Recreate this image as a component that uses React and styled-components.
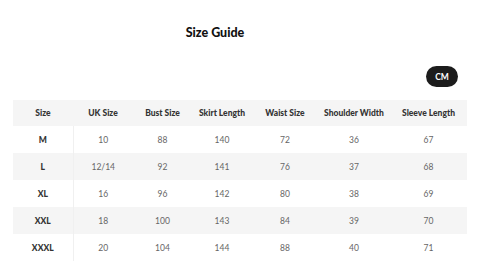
import React from 'react'
import styled, { createGlobalStyle } from 'styled-components'

const GlobalStyle = createGlobalStyle`
    html, body {
        margin: 0;
        padding: 0;
        background: #fff;
    }
`

const columns = [
    { label: 'Size', width: 60 },
    { label: 'UK Size', width: 60 },
    { label: 'Bust Size', width: 59 },
    { label: 'Skirt Length', width: 60 },
    { label: 'Waist Size', width: 66 },
    { label: 'Shoulder Width', width: 72 },
    { label: 'Sleeve Length', width: 77 },
]

const rows = [
    ['M', '10', '88', '140', '72', '36', '67'],
    ['L', '12/14', '92', '141', '76', '37', '68'],
    ['XL', '16', '96', '142', '80', '38', '69'],
    ['XXL', '18', '100', '143', '84', '39', '70'],
    ['XXXL', '20', '104', '144', '88', '40', '71'],
]

const App = () => {
    return (
        <StyledPage>
            <GlobalStyle />
            <StyledTitle>Size Guide</StyledTitle>
            <StyledToolbar>
                <StyledUnit>CM</StyledUnit>
            </StyledToolbar>
            <StyledTable>
                <colgroup>
                    {columns.map(col => (
                        <col key={col.label} style={{ width: col.width }} />
                    ))}
                </colgroup>
                <thead>
                    <tr>
                        {columns.map(col => (
                            <StyledHead key={col.label}>{col.label}</StyledHead>
                        ))}
                    </tr>
                </thead>
                <tbody>
                    {rows.map((row, i) => (
                        <StyledRow key={row[0]} $striped={i % 2 === 1}>
                            {row.map((value, j) => (
                                <StyledCell key={j} $first={j === 0}>{value}</StyledCell>
                            ))}
                        </StyledRow>
                    ))}
                </tbody>
            </StyledTable>
        </StyledPage>
    )
}

const StyledPage = styled.div`
    width: 480px;
    height: 263px;
    overflow: hidden;
    padding-top: 25px;
    box-sizing: border-box;
`

const StyledTitle = styled.h2`
    margin: 0;
    padding-right: 50px;
    text-align: center;
    font-family: "Lato", "Noto Sans", sans-serif;
    font-weight: 900;
    font-size: 12.5px;
    line-height: 16px;
    color: #111;
`

const StyledToolbar = styled.div`
    display: flex;
    justify-content: flex-end;
    padding: 25px 22px 0 0;
`

const StyledUnit = styled.button`
    width: 32px;
    height: 21px;
    border: none;
    border-radius: 11px;
    background: #1c1c1c;
    color: #fff;
    font-family: "Lato", "Noto Sans", sans-serif;
    font-size: 8.5px;
    font-weight: 700;
    padding: 0;
`

const StyledTable = styled.table`
    margin: 13px 0 0 13px;
    width: 454px;
    table-layout: fixed;
    border-collapse: collapse;
    font-family: "Lato", "Noto Sans", sans-serif;
`

const StyledHead = styled.th`
    height: 26px;
    padding: 0;
    background: #f5f5f5;
    font-size: 8.5px;
    font-weight: 900;
    color: #333;
    text-align: center;
    white-space: nowrap;
`

const StyledRow = styled.tr`
    background: ${props => (props.$striped ? '#f5f5f5' : '#fff')};
`

const StyledCell = styled.td`
    height: 27px;
    padding: 0;
    text-align: center;
    font-size: 8.5px;
    font-weight: ${props => (props.$first ? 900 : 400)};
    color: ${props => (props.$first ? '#333' : '#666')};
    border-right: ${props => (props.$first ? '1px solid #f0f0f0' : 'none')};
`

export default App
